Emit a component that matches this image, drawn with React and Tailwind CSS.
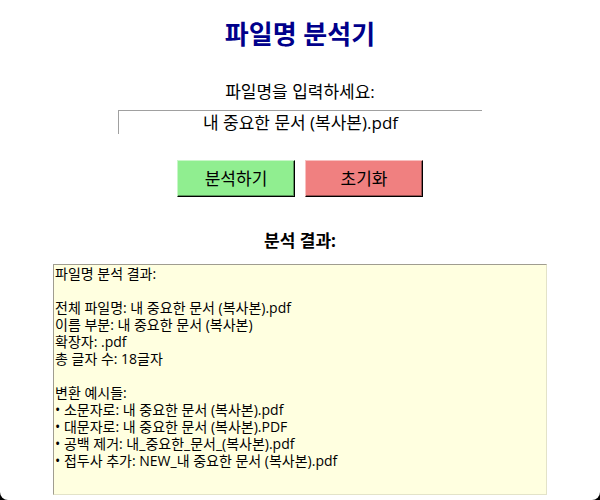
import { useState } from "react";

const INITIAL_NAME = "내 중요한 문서 (복사본).pdf";

function analyze(name) {
  const dot = name.lastIndexOf(".");
  const stem = dot > 0 ? name.slice(0, dot) : name;
  const ext = dot > 0 ? name.slice(dot) : "";
  return [
    "파일명 분석 결과:",
    "",
    `전체 파일명: ${name}`,
    `이름 부분: ${stem}`,
    `확장자: ${ext}`,
    `총 글자 수: ${name.length}글자`,
    "",
    "변환 예시들:",
    `• 소문자로: ${name.toLowerCase()}`,
    `• 대문자로: ${name.toUpperCase()}`,
    `• 공백 제거: ${name.replaceAll(" ", "_")}`,
    `• 접두사 추가: NEW_${name}`,
  ].join("\n");
}

export default function App() {
  const [name, setName] = useState(INITIAL_NAME);
  const [result, setResult] = useState(analyze(INITIAL_NAME));

  const reset = () => {
    setName("");
    setResult("");
  };

  return (
    <div className="min-h-screen bg-black font-['Open_Sans','Noto_Sans_CJK_KR',sans-serif] text-black">
      <main className="flex min-h-screen flex-col items-center rounded-b-lg bg-white px-4 pt-5 pb-1">
        <h1 className="text-[26px] leading-7 font-bold text-[#00008b]">파일명 분석기</h1>

        <label htmlFor="filename" className="mt-8 text-[17px] leading-6">
          파일명을 입력하세요:
        </label>
        <input
          id="filename"
          type="text"
          value={name}
          onChange={(e) => setName(e.target.value)}
          className="mt-1.5 h-6 w-full max-w-[364px] border-t border-l border-[#a0a0a0] bg-white text-center text-[17px] leading-6 outline-none"
        />

        <div className="mt-[26px] flex gap-2.5">
          <button
            type="button"
            onClick={() => setResult(analyze(name))}
            className="h-[37px] w-[118px] border border-t-[#c8f7c8] border-r-black border-b-black border-l-[#c8f7c8] bg-[#90ee90] text-[17px] leading-6 shadow-[inset_-1px_-1px_0_#5a955a]"
          >
            분석하기
          </button>
          <button
            type="button"
            onClick={reset}
            className="h-[37px] w-[118px] border border-t-[#f8c0c0] border-r-black border-b-black border-l-[#f8c0c0] bg-[#f08080] text-[17px] leading-6 shadow-[inset_-1px_-1px_0_#965050]"
          >
            초기화
          </button>
        </div>

        <label htmlFor="result" className="mt-8 text-[17px] leading-6 font-bold">
          분석 결과:
        </label>
        <textarea
          id="result"
          readOnly
          value={result}
          className="mt-[11px] h-[231px] w-full max-w-[494px] resize-none border border-t-[#a09d90] border-r-[#e3e3c8] border-b-[#e3e3c8] border-l-[#a09d90] bg-[#ffffe0] px-px text-[14px] leading-[17px] outline-none"
        />
      </main>
    </div>
  );
}
